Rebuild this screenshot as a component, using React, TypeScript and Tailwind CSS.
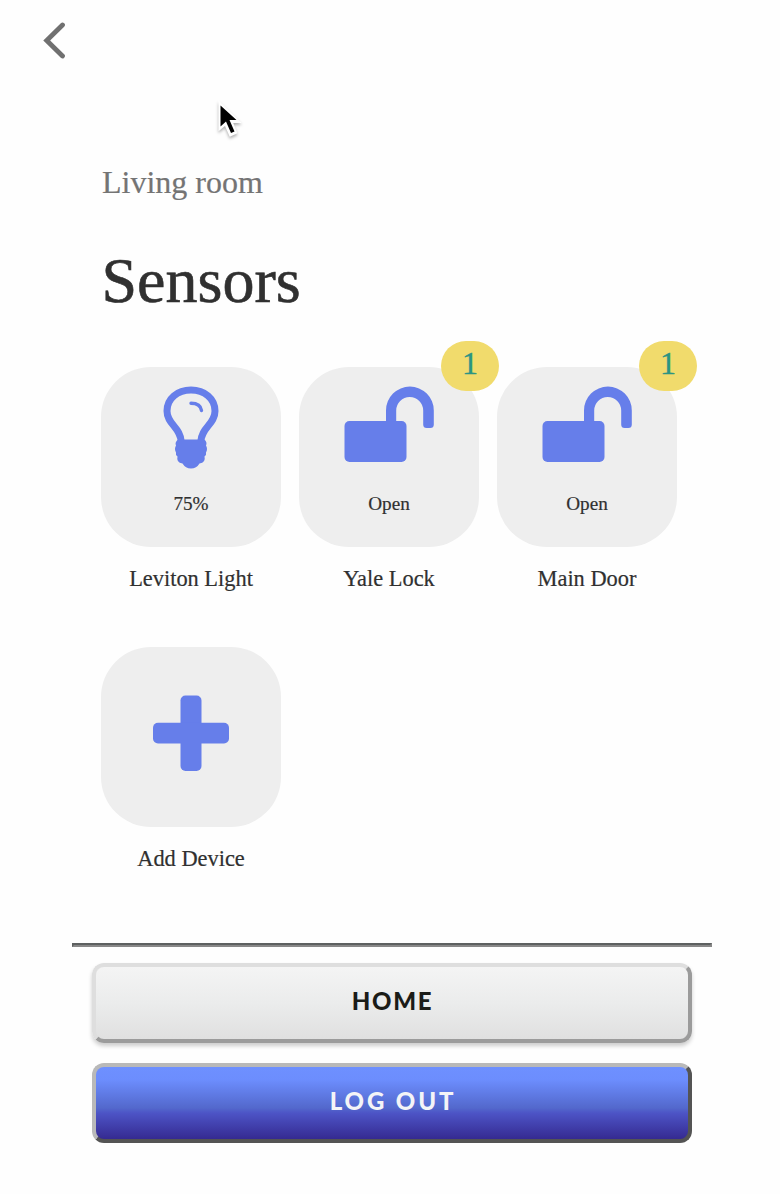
import type { ReactNode } from "react";

function BulbIcon() {
  return (
    <svg width="56" height="84" viewBox="0 0 56 84" className="block">
      <path
        d="M18.300 56C17.500 41 4 38.500 4 25C4 12.500 14.500 4 28 4S52 12.500 52 25C52 38.500 38.500 41 37.700 56"
        fill="none"
        stroke="#667eea"
        strokeWidth="7"
      />
      <path
        d="M15 53.500H41.500Q44.500 56.500 43 59.500Q45 63 43 66.500Q43.700 69 41.500 70.500Q43 76.500 36.500 77.500Q33.500 82.500 28 82.500Q22.500 82.500 19.500 77.500Q13 76.500 14.500 70.500Q12.300 69 13 66.500Q11 63 13 59.500Q11.500 56.500 15 53.500Z"
        fill="#667eea"
      />
      <path d="M28 17.200Q37.500 17.200 38.500 24.500" fill="none" stroke="#667eea" strokeWidth="3.400" strokeLinecap="round" />
    </svg>
  );
}

function OpenLockIcon() {
  return (
    <svg width="90" height="84" viewBox="0 0 90 84" className="block">
      <rect x="0.500" y="35" width="62" height="41" rx="5" fill="#667eea" />
      <path
        d="M42 37V24.500a23.900 23.900 0 0 1 47.800 0V38.500q0 3.500-3.500 3.500h-3.600q-3.500 0-3.500-3.500V24.500a13.500 13.500 0 0 0-27 0V37Z"
        fill="#667eea"
      />
    </svg>
  );
}

function PlusIcon() {
  return (
    <svg width="76" height="76" viewBox="0 0 76 76" className="block">
      <rect x="27.500" y="0.500" width="21" height="75.500" rx="5" fill="#667eea" />
      <rect x="0" y="27.800" width="76" height="20.700" rx="5" fill="#667eea" />
    </svg>
  );
}

type DeviceProps = { name: string; status?: string; alerts?: number; children: ReactNode };

function Device({ name, status, alerts, children }: DeviceProps) {
  return (
    <div className="flex h-[280px] w-[180px] flex-col items-center">
      <div
        className={
          status
            ? "relative flex h-[180px] w-[180px] flex-col items-center rounded-[50px] bg-[#eeeeee] pt-[19px]"
            : "relative flex h-[180px] w-[180px] flex-col items-center rounded-[50px] bg-[#eeeeee] pt-12"
        }
      >
        {children}
        {status && <span className="mt-[23px] text-[19.2px] leading-[22px]">{status}</span>}
        {alerts && (
          <span className="absolute -top-[26px] left-[142px] flex h-[50px] w-[58px] justify-center rounded-[26px] bg-[#f1db6c] pt-[4px] text-[32px] leading-[36px] text-[#2c9482] [-webkit-text-stroke:0.4px_#2c9482]">
            {alerts}
          </span>
        )}
      </div>
      <span className="mt-[19px] text-[22.4px] leading-[25px]">{name}</span>
    </div>
  );
}

export default function App() {
  return (
    <main className="relative flex h-[1194px] w-[780px] flex-col overflow-hidden bg-[#fefefe] font-['Liberation_Serif',serif] text-[#303030] [-webkit-text-stroke:0.2px_currentColor]">
      <header className="h-[164px] pt-[22px] pl-[42px]">
        <svg width="24" height="38" viewBox="0 0 24 38" fill="none" stroke="#707070" strokeWidth="4.800" strokeLinecap="round">
          <path d="M20.500 3L4.700 18.500L20.500 34" strokeLinejoin="miter" />
        </svg>
      </header>
      <svg className="absolute top-[98px] left-[214px] drop-shadow-[0_2px_1.500px_rgba(0,0,0,0.3)]" width="30" height="42" viewBox="0 0 30 42">
        <path d="M6 6V30L11.500 25.500L16.500 36.700L21.500 34.500L17 23.500H24Z" fill="#fff" stroke="#fff" strokeWidth="3" />
        <path d="M6.500 7.500V28.500L12 23.500L17 35L20.500 33.500L15.500 22H22.500Z" fill="#000" />
      </svg>
      <section className="flex flex-col pl-[101px]">
        <p className="pl-[1px] text-[32px] leading-[37px] text-[#747474]">Living room</p>
        <h1 className="mt-[43px] pl-[0.500px] text-[64px] leading-[74px] [-webkit-text-stroke:0.6px_#303030]">Sensors</h1>
        <div className="mt-[49px] grid grid-cols-[180px_180px_180px] gap-x-[18px]">
          <Device name="Leviton Light" status="75%"><BulbIcon /></Device>
          <Device name="Yale Lock" status="Open" alerts={1}><OpenLockIcon /></Device>
          <Device name="Main Door" status="Open" alerts={1}><OpenLockIcon /></Device>
          <Device name="Add Device"><PlusIcon /></Device>
        </div>
      </section>
      <footer className="mt-4 ml-[72px] flex w-[640px] flex-col items-center font-['Lato',sans-serif] [-webkit-text-stroke:0px]">
        <div className="h-1 w-full border-2 border-t-[#5d6060] border-r-[#888888] border-b-[#888888] border-l-[#5d6060]" />
        <button className="mt-4 h-20 w-[600px] rounded-xl border-4 border-t-[#dedede] border-r-[#9b9b9b] border-b-[#9b9b9b] border-l-[#dedede] bg-linear-to-b from-[#f4f4f4] via-[#ebecec] to-[#e0e0e0] pb-[4px] pl-[1px] text-2xl font-black tracking-[1.700px] text-[#1b1c18] shadow-[0_3px_4px_rgba(0,0,0,0.2)]">
          HOME
        </button>
        <button className="mt-5 h-20 w-[600px] rounded-xl border-4 border-t-[#b9b9b9] border-r-[#545454] border-b-[#545454] border-l-[#b9b9b9] bg-[linear-gradient(180deg,#6e90ff_0%,#6c8dfd_18%,#5368cc_57%,#4d54c6_64%,#352a91_100%)] pb-[4px] pl-[2px] text-2xl font-black tracking-[2.900px] text-[#f4f4f7]">
          LOG OUT
        </button>
      </footer>
    </main>
  );
}
